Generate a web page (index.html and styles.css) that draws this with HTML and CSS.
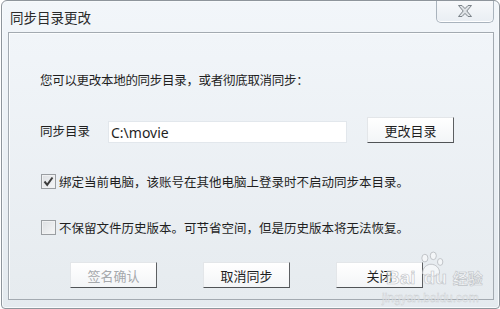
FILE: index.html
```html
<!DOCTYPE html>
<html>
  <head>
    <title>同步目录更改</title>
    <link rel="stylesheet" href="styles.css">
  </head>
  <body>
    <div class="window">
      <div class="titlebar">
        <span class="title">同步目录更改</span>
        <button class="close" title="关闭">
          <svg width="16" height="12" viewBox="0 0 16 12">
            <path d="M1.5 0.5 L5 0.5 L8 3.6 L11 0.5 L14.5 0.5 L9.8 6 L14.5 11.5 L11 11.5 L8 8.4 L5 11.5 L1.5 11.5 L6.2 6 Z"
                  fill="#dfe3e7" stroke="#7b8289" stroke-width="1" stroke-linejoin="round" />
          </svg>
        </button>
      </div>

      <div class="panel">
        <p class="intro">您可以更改本地的同步目录，或者彻底取消同步：</p>

        <div class="dir-row">
          <span class="label">同步目录</span>
          <input type="text" class="path" value="C:\movie" />
          <button class="btn change">更改目录</button>
        </div>

        <label class="check-row first">
          <span class="box checked">
            <svg width="13" height="13" viewBox="0 0 13 13">
              <path d="M2.5 6.5 L5.2 9.8 L10.5 2.5" fill="none" stroke="#3d3d3d" stroke-width="2" />
            </svg>
          </span>
          绑定当前电脑，该账号在其他电脑上登录时不启动同步本目录。
        </label>

        <label class="check-row second">
          <span class="box"></span>
          不保留文件历史版本。可节省空间，但是历史版本将无法恢复。
        </label>

        <div class="actions">
          <button class="btn" disabled>签名确认</button>
          <button class="btn">取消同步</button>
          <button class="btn">关闭</button>
        </div>
      </div>

      <!-- watermark from the original capture -->
      <div class="watermark">
        <svg class="paw" width="26" height="28" viewBox="0 0 34 34">
          <g fill="rgba(255,255,255,0.5)" stroke="#bcc0c4" stroke-width="1.2">
            <ellipse cx="9" cy="8" rx="4" ry="5" />
            <ellipse cx="20" cy="5" rx="4" ry="5" />
            <ellipse cx="29" cy="13" rx="3.5" ry="4.5" />
            <path d="M6 28 C6 20 12 16 17 16 C23 16 29 21 28 28 C27 33 8 33 6 28 Z" />
          </g>
        </svg>
        <span class="wm-brand">Bai<span class="wm-du">du</span><span class="wm-cn">经验</span></span>
        <span class="wm-url">jingyan.baidu.com</span>
      </div>
    </div>
  </body>
</html>
```

FILE: styles.css
```css
/* Page */
body {
  margin: 0;
  width: 500px;
  height: 309px;
  font-family: "Noto Sans CJK SC", "Noto Sans", sans-serif;
  font-size: 12.5px;
  color: #1f1f1f;
  background: #ffffff;
  overflow: hidden;
}

/* Outer window frame */
.window {
  position: relative;
  box-sizing: border-box;
  width: 499px;
  height: 309px;
  margin-left: 1px;
  border: 1px solid #8e959c;
  border-radius: 6px 6px 4px 4px;
  background: linear-gradient(#f2f6fa, #e4eaef);
  box-shadow: inset 0 0 0 1px #f7fafc;
  overflow: hidden;
}

/* Title bar */
.titlebar {
  display: flex;
  justify-content: space-between;
  align-items: flex-start;
  height: 31px;
}

.title {
  padding: 6px 0 0 8px;
  font-size: 13.5px;
  color: #2a2a2a;
}

.close {
  display: flex;
  justify-content: center;
  align-items: center;
  width: 58px;
  height: 23px;
  margin: -1px 5px 0 0;
  padding: 0;
  border: 1px solid #a9b3bd;
  border-top: none;
  border-radius: 0 0 5px 5px;
  background: linear-gradient(#f7f9fb, #e9eef3);
  box-shadow: inset 0 -1px 0 #ffffff;
}

/* Inner content panel */
.panel {
  display: flex;
  flex-direction: column;
  align-items: flex-start;
  box-sizing: border-box;
  height: 268px;
  margin: 0 5px 0 6px;
  padding-left: 31px;
  border: 1px solid #a3aab1;
  background: linear-gradient(#f1f5f9, #e6ebef);
  box-shadow: inset 1px 1px 0 #fbfdfe;
}

.intro {
  margin: 37px 0 0 0;
  line-height: 20px;
  letter-spacing: -0.3px;
}

/* Directory row */
.dir-row {
  display: flex;
  align-items: center;
  height: 26px;
  margin-top: 27px;
}

.label {
  width: 68px;
}

.path {
  box-sizing: border-box;
  width: 239px;
  height: 22px;
  margin-top: 4px;
  padding: 0 2px;
  border: 1px solid #e2e7ec;
  background: #ffffff;
  font-family: "Noto Sans", sans-serif;
  font-size: 14px;
  color: #1f1f1f;
}

.change {
  margin-left: 20px;
}

/* Buttons */
.btn {
  box-sizing: border-box;
  width: 87px;
  height: 26px;
  padding: 0;
  border: 1px solid;
  border-color: #e3e6e9 #5c5f62 #505356 #e3e6e9;
  background: linear-gradient(#ffffff, #f3f5f7);
  font-family: "Noto Sans CJK SC", sans-serif;
  font-size: 13px;
  color: #1f1f1f;
  cursor: pointer;
}

.btn:disabled {
  color: #a6a9ac;
  cursor: default;
}

/* Checkbox rows */
.check-row {
  display: flex;
  align-items: center;
  gap: 3px;
  height: 20px;
  margin-left: 1px;
}

.check-row.first {
  margin-top: 28px;
}

.check-row.second {
  margin-top: 26px;
}

.box {
  display: flex;
  justify-content: center;
  align-items: center;
  box-sizing: border-box;
  width: 15px;
  height: 15px;
  border: 1px solid #9a9ea2;
  background: linear-gradient(135deg, #dcdfe2, #f6f7f8);
  box-shadow: inset 0 0 0 1px #f0f1f2;
}

/* Bottom action buttons */
.actions {
  display: flex;
  gap: 46px;
  margin: 25px 0 0 30px;
}

/* Faint watermark in the lower right corner */
.watermark {
  position: absolute;
  left: 380px;
  top: 250px;
  width: 100px;
  height: 56px;
  pointer-events: none;
}

.paw {
  position: absolute;
  left: 36px;
  top: 0;
}

.wm-brand {
  position: absolute;
  left: 4px;
  top: 16px;
  font-family: "Liberation Sans", sans-serif;
  font-size: 19px;
  font-weight: bold;
  color: rgba(255, 255, 255, 0.5);
  -webkit-text-stroke: 0.6px #bec2c6;
  white-space: nowrap;
}

.wm-du {
  margin-left: 8px;
}

.wm-cn {
  margin-left: 6px;
  font-family: "Noto Sans CJK SC", sans-serif;
  font-size: 15px;
}

.wm-url {
  position: absolute;
  left: 0;
  top: 40px;
  font-family: "Liberation Sans", sans-serif;
  font-size: 12px;
  color: rgba(255, 255, 255, 0.55);
  -webkit-text-stroke: 0.4px #c6cacd;
  white-space: nowrap;
}
```
